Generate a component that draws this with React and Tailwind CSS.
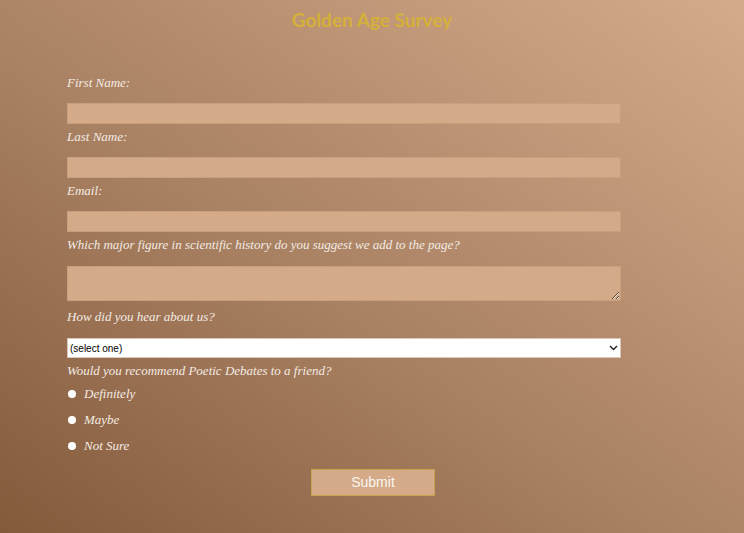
import React from "react";

const labelCls =
  "block h-[24px] leading-[26px] text-[13px] italic text-[#f3ebe3] [font-family:'Liberation_Serif',serif]";
const inputCls =
  "block w-[554px] h-[21px] bg-[#d4aa89] border border-[#c9a07f] outline-none";

export default function App() {
  return (
    <div className="min-h-[533px] w-full bg-[linear-gradient(to_top_right,#845a3b_0%,#a98163_45%,#d5ab8a_100%)] [font-family:'Liberation_Sans',sans-serif]">
      <h1 className="pt-[9px] h-[58px] text-center text-[19px] leading-[22px] font-bold text-[#d5b03a] [font-family:'Lato',sans-serif]">
        Golden Age Survey
      </h1>
      <form className="ml-[67px] w-[554px]" onSubmit={(e) => e.preventDefault()}>
        <div className="h-[12px]" />
        <label className={labelCls}>First Name:</label>
        <div className="h-[9px]" />
        <input className={inputCls} type="text" />
        <label className={labelCls}>Last Name:</label>
        <div className="h-[9px]" />
        <input className={inputCls} type="text" />
        <label className={labelCls}>Email:</label>
        <div className="h-[9px]" />
        <input className={inputCls} type="email" />
        <label className={labelCls}>
          Which major figure in scientific history do you suggest we add to the page?
        </label>
        <div className="h-[10px]" />
        <textarea className="block w-[554px] h-[35px] bg-[#d4aa89] border border-[#c9a07f] outline-none" />
        <div className="h-[3px]" />
        <label className={labelCls}>How did you hear about us?</label>
        <div className="h-[10px]" />
        <div className="relative w-[554px] h-[20px]">
          <select className="appearance-none block w-full h-full bg-white border border-[#d8c8bc] pl-[2px] text-[10px] text-black outline-none [font-family:'Liberation_Sans',sans-serif]">
            <option>(select one)</option>
          </select>
          <svg
            className="absolute right-[3px] top-[7px] pointer-events-none"
            width="9"
            height="6"
            viewBox="0 0 9 6"
          >
            <path d="M1 1 L4.5 4.5 L8 1" fill="none" stroke="#222" strokeWidth="1.4" />
          </svg>
        </div>
        <label className={labelCls}>Would you recommend Poetic Debates to a friend?</label>
        <div className="flex flex-col -mt-[1px]">
          {["Definitely", "Maybe", "Not Sure"].map((t) => (
            <div key={t} className="flex items-center h-[26px]">
              <span className="ml-[1px] w-[8px] h-[8px] rounded-full bg-white" />
              <span className="ml-[8px] text-[13px] italic text-[#f3ebe3] [font-family:'Liberation_Serif',serif]">
                {t}
              </span>
            </div>
          ))}
        </div>
      </form>
      <div className="flex justify-center pt-[10px] pb-[38px]">
        <button className="ml-[2px] w-[124px] h-[27px] bg-[#d4aa89] border border-[#c9a24e] text-[#fbf6f0] text-[14px] font-normal [font-family:'Liberation_Sans',sans-serif]">
          Submit
        </button>
      </div>
    </div>
  );
}
